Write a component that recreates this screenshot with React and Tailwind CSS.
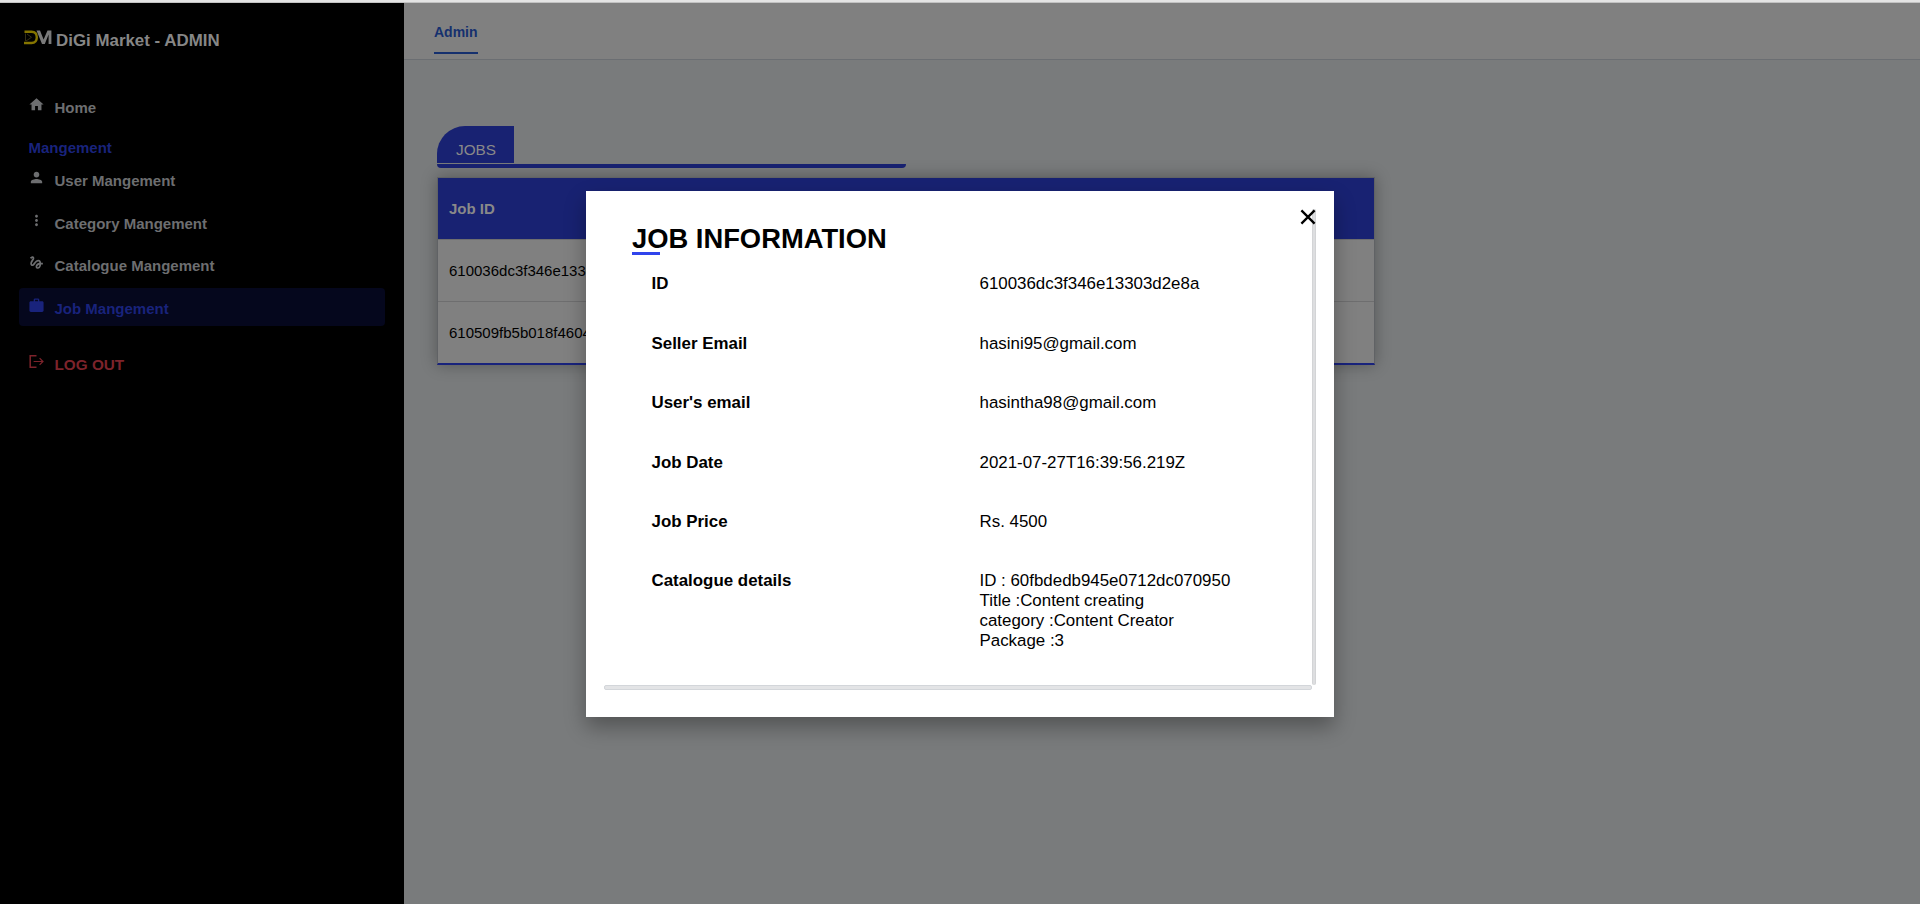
import React from "react";
import { MdHome, MdPerson, MdMoreVert, MdGesture, MdWork } from "react-icons/md";

function LogoutIcon({ className }) {
  return (
    <svg viewBox="0 0 17 17" className={className} fill="none" stroke="currentColor">
      <path d="M8.5 2.7H2.2v11.6h6.3" strokeWidth="1.5" />
      <path d="M5.6 8.5h9.4M11.6 5.1L15 8.5l-3.4 3.4" strokeWidth="1.2" />
    </svg>
  );
}

function Logo() {
  return (
    <svg viewBox="0 0 28 15" className="h-[15px] w-[28px] shrink-0">
      <path d="M.5 1.700H7.500c4 0 5.300 2.800 5.300 5.600S11.500 13 7.500 13H0" fill="none" stroke="#857500" strokeWidth="2.400" />
      <path d="M1.500 3.500v7.500M3 4l4.500 3.300L2 11" fill="none" stroke="#3a3618" strokeWidth="0.9" />
      <path d="M12.500 .5h3.500l3.600 9L23.500 .5h3.900v13.500h-2.800V4.500L20.800 14h-2.800z" fill="#7a7a7a" />
    </svg>
  );
}

function NavItem({ icon: Icon, label, className }) {
  return (
    <div className={`flex h-[38px] items-start rounded-[4px] pl-[9px] leading-[18px] font-bold ${className}`}>
      <Icon className="mt-[9px] size-[17px] shrink-0" />
      <span className="ml-[9.500px] mt-[12px]">{label}</span>
    </div>
  );
}

function Sidebar() {
  return (
    <aside className="w-[404px] shrink-0 bg-black px-[19px] text-[15px] text-[#6d6e70]">
      <div className="flex items-start pl-[5px] pt-[27px]">
        <Logo />
        <span className="ml-[4px] mt-px text-[16.900px] leading-[20px] font-bold text-[#868686]">DiGi Market - ADMIN</span>
      </div>
      <nav className="mt-[36px] flex flex-col">
        <NavItem icon={MdHome} label="Home" className="" />
        <div className="mt-[14px] pl-[9.500px] leading-[18px] font-bold text-[#19237c]">Mangement</div>
        <NavItem icon={MdPerson} label="User Mangement" className="mt-[3px]" />
        <NavItem icon={MdMoreVert} label="Category Mangement" className="mt-[5px]" />
        <NavItem icon={MdGesture} label="Catalogue Mangement" className="mt-[4px]" />
        <NavItem icon={MdWork} label="Job Mangement" className="mt-[5px] bg-[#05071d] text-[#19237c]" />
        <NavItem icon={LogoutIcon} label="LOG OUT" className="mt-[18px] text-[15.300px] text-[#7d232b]" />
      </nav>
    </aside>
  );
}

function JobsTable() {
  const ids = ["610036dc3f346e1330", "610509fb5b018f4604"];
  return (
    <div className="mt-[9px] w-[938px] border-b-2 border-l border-t border-r border-b-[#19237c] border-l-[#606265] border-t-[#606265] border-r-[#606265] bg-[#808080] text-[15px] shadow-[0_0_15px_rgba(0,0,0,0.3)]">
      <div className="flex h-[61px] items-center bg-[#182272] pl-[11px] pt-px font-bold text-[#898989]">Job ID</div>
      {ids.map((id) => (
        <div key={id} className="flex h-[62px] items-center border-t border-[#6e6e6f] pl-[11px] pt-px text-black">
          {id}
        </div>
      ))}
    </div>
  );
}

const rows = [
  ["ID", ["610036dc3f346e13303d2e8a"]],
  ["Seller Email", ["hasini95@gmail.com"]],
  ["User's email", ["hasintha98@gmail.com"]],
  ["Job Date", ["2021-07-27T16:39:56.219Z"]],
  ["Job Price", ["Rs. 4500"]],
  ["Catalogue details", ["ID : 60fbdedb945e0712dc070950", "Title :Content creating", "category :Content Creator", "Package :3"]],
];

function JobModal() {
  return (
    <div className="absolute left-[586px] top-[191px] h-[526px] w-[748px] bg-white px-[18px] pt-[18px] text-black shadow-[0_10px_20px_rgba(0,0,0,0.32)]">
      <div className="flex h-[476px]">
        <div className="min-w-0 flex-1 pl-[28px] pt-[14px]">
          <h2 className="text-[27.350px] leading-[32px] font-bold">JOB INFORMATION</h2>
          <div className="-mt-[3px] h-[3px] w-[28px] bg-[#3044ec]" />
          <dl className="mt-[19.300px] pl-[19.500px]">
            {rows.map(([k, v]) => (
              <div key={k} className="mb-[39.42px] flex text-[16.900px] leading-[20px]">
                <dt className="w-[328px] font-bold">{k}</dt>
                <dd>
                  {v.map((line) => (
                    <div key={line}>{line}</div>
                  ))}
                </dd>
              </div>
            ))}
          </dl>
        </div>
        <div className="w-[4px] shrink-0 rounded-[2px] border-x border-[#d3d4d6] bg-[#dddee0]" />
      </div>
      <div className="h-[5px] w-[708px] rounded-[2px] border border-[#d3d6da] bg-[#e3e4e6]" />
      <svg viewBox="0 0 16 16" className="absolute left-[714px] top-[18px] size-[16px]" stroke="#000" strokeWidth="2.300">
        <path d="M1.400 1.400l13.200 13.200M14.600 1.400L1.400 14.600" />
      </svg>
    </div>
  );
}

export default function App() {
  return (
    <div className="relative flex h-[904px] w-[1920px] flex-col overflow-hidden bg-[#797b7c] font-['Liberation_Sans',Arial,sans-serif]">
      <div className="h-[3px] shrink-0 border-b border-[#c2c2c2] bg-[#e4e4e4]" />
      <div className="flex flex-1">
        <Sidebar />
        <main className="flex-1">
          <header className="h-[57px] border-b border-[#6b6e72] bg-[#808080] pl-[30px]">
            <div className="flex h-[51px] w-[44px] flex-col border-b-2 border-[#15306e] pt-[20px] text-[14px] leading-[18px] font-bold text-[#15306e]">
              Admin
            </div>
          </header>
          <div className="pl-[33px] pt-[66px]">
            <div className="flex h-[37px] w-[77px] rounded-tl-[28px] bg-[#182272] pl-[19px] pt-[14px] text-[15.300px] leading-[20px] text-[#898989]">JOBS</div>
            <div className="mt-px h-[4px] w-[469px] rounded-b-[4px] bg-[#182272]" />
            <JobsTable />
          </div>
        </main>
      </div>
      <JobModal />
    </div>
  );
}
